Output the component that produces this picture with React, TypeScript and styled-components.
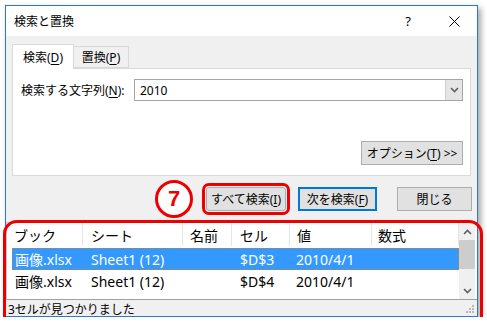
import React from 'react';
import styled, { createGlobalStyle } from 'styled-components';

const GlobalStyle = createGlobalStyle`
  html, body {
    margin: 0;
    background: #ffffff;
  }
  body {
    font-family: "Noto Sans", "Noto Sans CJK JP", sans-serif;
    color: #000;
  }
`;

const Page = styled.div`
  padding: 5px 0 0 5px;
`;

const Window = styled.div`
  width: 473px;
  height: 312px;
  box-sizing: border-box;
  border: 1px solid #2b78d4;
  background: #f0f0f0;
  box-shadow: 3px 3px 6px rgba(0, 0, 0, 0.35);
  display: flex;
  flex-direction: column;
`;

const TitleBar = styled.div`
  height: 30px;
  background: #ffffff;
  display: flex;
  align-items: center;
  padding-left: 8px;
  font-size: 12px;
`;

const Title = styled.div`
  flex: 1;
`;

const TitleButton = styled.div`
  width: 46px;
  height: 30px;
  display: flex;
  align-items: center;
  justify-content: center;
  font-size: 13px;
`;

const Body = styled.div`
  padding: 8px 6px 0 6px;
  display: flex;
  flex-direction: column;
`;

const Tabs = styled.div`
  display: flex;
  align-items: flex-end;
  height: 24px;
`;

const Tab = styled.div<{ $active?: boolean }>`
  box-sizing: border-box;
  flex-shrink: 0;
  width: ${({ $active }) => ($active ? '62px' : '55px')};
  height: ${({ $active }) => ($active ? '25px' : '22px')};
  margin-bottom: ${({ $active }) => ($active ? '-1px' : '0')};
  display: flex;
  align-items: center;
  justify-content: center;
  white-space: nowrap;
  font-size: 12px;
  background: ${({ $active }) => ($active ? '#ffffff' : '#f0f0f0')};
  border: 1px solid #d9d9d9;
  border-bottom: ${({ $active }) => ($active ? 'none' : '1px solid #d9d9d9')};
  border-left: ${({ $active }) => ($active ? '1px solid #d9d9d9' : 'none')};
  position: relative;
  z-index: ${({ $active }) => ($active ? 1 : 0)};
`;

const U = styled.span`
  text-decoration: underline;
  text-underline-offset: 2px;
`;

const Panel = styled.div`
  height: 108px;
  box-sizing: border-box;
  background: #ffffff;
  border: 1px solid #d9d9d9;
  padding: 10px 7px 10px 8px;
  display: flex;
  flex-direction: column;
  justify-content: space-between;
`;

const FieldRow = styled.div`
  display: flex;
  align-items: center;
  height: 22px;
`;

const FieldLabel = styled.div`
  width: 113px;
  font-size: 12px;
  white-space: nowrap;
`;

const Combo = styled.div`
  flex: 1;
  height: 22px;
  box-sizing: border-box;
  border: 1px solid #a5a5a5;
  display: flex;
  align-items: center;
  font-size: 12px;
  padding-left: 5px;
`;

const ComboText = styled.div`
  flex: 1;
`;

const ComboArrow = styled.div`
  width: 16px;
  height: 20px;
  background: #e5e5e5;
  border-left: 1px solid #cfcfcf;
  display: flex;
  align-items: center;
  justify-content: center;
`;

const OptionRow = styled.div`
  display: flex;
  justify-content: flex-end;
`;

const Button = styled.div<{ $width: number; $default?: boolean; $highlight?: boolean }>`
  width: ${({ $width }) => $width}px;
  height: 24px;
  flex-shrink: 0;
  box-sizing: border-box;
  background: #e1e1e1;
  border: ${({ $default }) => ($default ? '2px solid #0078d7' : '1px solid #adadad')};
  display: flex;
  align-items: center;
  justify-content: center;
  white-space: nowrap;
  font-size: 12px;
  border-radius: ${({ $highlight }) => ($highlight ? '3px' : '0')};
  box-shadow: ${({ $highlight }) =>
    $highlight ? '0 0 0 1px #f0f0f0, 0 0 0 4px #ee0000' : 'none'};
`;

const CloseButton = styled(Button)`
  margin-left: 8px;
`;

const ButtonRow = styled.div`
  margin-top: 11px;
  margin-right: -1px;
  height: 24px;
  display: flex;
  align-items: center;
  justify-content: flex-end;
  gap: 12px;
`;

const StepBadge = styled.div`
  width: 38px;
  height: 38px;
  box-sizing: border-box;
  border: 3px solid #ee0000;
  border-radius: 50%;
  background: #ffffff;
  color: #ee0000;
  font-family: "Liberation Sans", Arial, sans-serif;
  font-weight: bold;
  font-size: 22px;
  display: flex;
  align-items: center;
  justify-content: center;
  margin-right: 1px;
  flex-shrink: 0;
`;

const Results = styled.div`
  margin-top: 11px;
  flex: 1;
  display: flex;
  flex-direction: column;
  position: relative;

  &::after {
    content: '';
    position: absolute;
    top: -2px;
    left: -3px;
    right: -6px;
    bottom: -12px;
    border: 3px solid #ee0000;
    border-radius: 14px;
    pointer-events: none;
  }
`;

const ListBox = styled.div`
  height: 78px;
  box-sizing: border-box;
  background: #ffffff;
  border-top: 1px solid #c8c8c8;
  border-bottom: 1px solid #a0a0a0;
  border-left: 1px solid #c8c8c8;
  display: flex;
  padding-right: 2px;
`;

const ListContent = styled.div`
  flex: 1;
  display: flex;
  flex-direction: column;
`;

const HeaderRow = styled.div`
  display: grid;
  grid-template-columns: 76px 100px 49px 58px 82px 1fr;
  height: 23px;
  margin-bottom: 2px;
`;

const HeaderCell = styled.div<{ $pad: number }>`
  padding-left: ${({ $pad }) => $pad}px;
  display: flex;
  align-items: center;
  font-size: 14px;
  border-right: 1px solid #e5e5e5;
  white-space: nowrap;
  overflow: hidden;
`;

const Row = styled.div<{ $selected?: boolean }>`
  margin-left: 5px;
  display: grid;
  grid-template-columns: 71px 100px 49px 58px 82px 1fr;
  height: 22px;
  box-sizing: border-box;
  background: ${({ $selected }) => ($selected ? '#3399ff' : '#ffffff')};
  color: ${({ $selected }) => ($selected ? '#ffffff' : '#000000')};
  border: 1px dotted ${({ $selected }) => ($selected ? '#c08040' : 'transparent')};
`;

const Cell = styled.div<{ $pad: number }>`
  padding-left: ${({ $pad }) => $pad}px;
  display: flex;
  align-items: center;
  font-size: 14px;
  white-space: nowrap;
`;

const Scrollbar = styled.div`
  width: 16px;
  background: #f0f0f0;
  display: flex;
  flex-direction: column;
  align-items: center;
`;

const ScrollArrow = styled.div`
  height: 17px;
  width: 16px;
  display: flex;
  align-items: center;
  justify-content: center;
`;

const Thumb = styled.div`
  width: 16px;
  height: 29px;
  background: #cdcdcd;
`;

const ScrollTrack = styled.div`
  flex: 1;
`;

const StatusBar = styled.div`
  flex: 1;
  display: flex;
  align-items: center;
  justify-content: space-between;
  padding: 0 3px 0 2px;
  font-size: 12px;
`;

const Chevron = ({ up }: { up?: boolean }) => (
  <svg width="9" height="6" viewBox="0 0 9 6">
    <path
      d={up ? 'M1 5 L4.5 1.5 L8 5' : 'M1 1 L4.5 4.5 L8 1'}
      fill="none"
      stroke="#606060"
      strokeWidth="1.6"
    />
  </svg>
);

const Grip = () => (
  <svg width="8" height="8" viewBox="0 0 8 8">
    {[
      [6, 0],
      [3, 3],
      [6, 3],
      [0, 6],
      [3, 6],
      [6, 6],
    ].map(([x, y]) => (
      <rect key={`${x}-${y}`} x={x} y={y} width="2" height="2" fill="#b8b8b8" />
    ))}
  </svg>
);

const rows = [
  { book: '画像.xlsx', sheet: 'Sheet1 (12)', name: '', cell: '$D$3', value: '2010/4/1', selected: true },
  { book: '画像.xlsx', sheet: 'Sheet1 (12)', name: '', cell: '$D$4', value: '2010/4/1' },
];

export default function App() {
  return (
    <>
      <GlobalStyle />
      <Page>
        <Window>
          <TitleBar>
            <Title>検索と置換</Title>
            <TitleButton>?</TitleButton>
            <TitleButton>
              <svg width="11" height="11" viewBox="0 0 11 11">
                <path d="M0.5 0.5 L10.5 10.5 M10.5 0.5 L0.5 10.5" stroke="#000" strokeWidth="1" />
              </svg>
            </TitleButton>
          </TitleBar>
          <Body>
            <Tabs>
              <Tab $active>
                検索(<U>D</U>)
              </Tab>
              <Tab>
                置換(<U>P</U>)
              </Tab>
            </Tabs>
            <Panel>
              <FieldRow>
                <FieldLabel>
                  検索する文字列(<U>N</U>):
                </FieldLabel>
                <Combo>
                  <ComboText>2010</ComboText>
                  <ComboArrow>
                    <Chevron />
                  </ComboArrow>
                </Combo>
              </FieldRow>
              <OptionRow>
                <Button $width={102}>
                  オプション(<U>T</U>)&nbsp;&gt;&gt;
                </Button>
              </OptionRow>
            </Panel>
            <ButtonRow>
              <StepBadge>7</StepBadge>
              <Button $width={80} $highlight>
                すべて検索(<U>I</U>)
              </Button>
              <Button $width={79} $default>
                次を検索(<U>F</U>)
              </Button>
              <CloseButton $width={75}>閉じる</CloseButton>
            </ButtonRow>
          </Body>
          <Results>
            <ListBox>
              <ListContent>
                <HeaderRow>
                  <HeaderCell $pad={7}>ブック</HeaderCell>
                  <HeaderCell $pad={8}>シート</HeaderCell>
                  <HeaderCell $pad={7}>名前</HeaderCell>
                  <HeaderCell $pad={8}>セル</HeaderCell>
                  <HeaderCell $pad={7}>値</HeaderCell>
                  <HeaderCell $pad={6}>数式</HeaderCell>
                </HeaderRow>
                {rows.map((r, i) => (
                  <Row key={i} $selected={r.selected}>
                    <Cell $pad={2}>{r.book}</Cell>
                    <Cell $pad={7}>{r.sheet}</Cell>
                    <Cell $pad={7}>{r.name}</Cell>
                    <Cell $pad={7}>{r.cell}</Cell>
                    <Cell $pad={5}>{r.value}</Cell>
                    <Cell $pad={5} />
                  </Row>
                ))}
              </ListContent>
              <Scrollbar>
                <ScrollArrow>
                  <Chevron up />
                </ScrollArrow>
                <Thumb />
                <ScrollTrack />
                <ScrollArrow>
                  <Chevron />
                </ScrollArrow>
              </Scrollbar>
            </ListBox>
            <StatusBar>
              <span>3セルが見つかりました</span>
              <Grip />
            </StatusBar>
          </Results>
        </Window>
      </Page>
    </>
  );
}
